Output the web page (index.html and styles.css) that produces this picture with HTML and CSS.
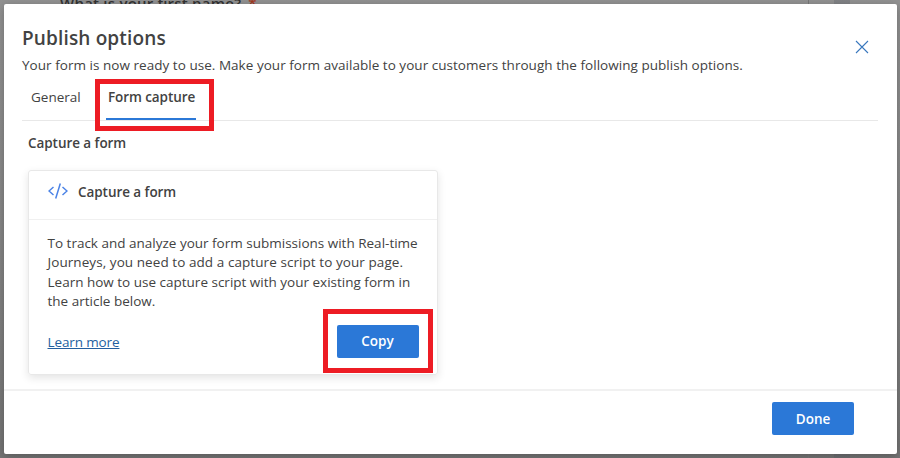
FILE: index.html
```html
<!DOCTYPE html>
<html lang="en">
<head>
<meta charset="utf-8">
<title>Publish options</title>
<link rel="stylesheet" href="styles.css">
</head>
<body>
<div class="backdrop">
  <div class="question">What is your first name? <span class="required">*</span></div>
  <div class="rail"></div>
</div>
<main class="dialog">
  <header class="head">
    <div>
      <h1 class="title">Publish options</h1>
      <p class="subtitle">Your form is now ready to use. Make your form available to your customers through the following publish options.</p>
    </div>
    <svg class="close" viewBox="0 0 14 14"><path d="M1 1L13 13M13 1L1 13"/></svg>
  </header>
  <nav class="tabs">
    <span class="tab">General</span>
    <span class="tab active">Form capture<i class="mark mark-tab"></i></span>
  </nav>
  <section class="content">
    <h2 class="section-title">Capture a form</h2>
    <article class="card">
      <div class="card-head">
        <svg class="code" viewBox="0 0 20 16"><path d="M5.5 4L1 8L5.5 12M14.5 4L19 8L14.5 12M12.3 .5L7.7 15.5"/></svg>
        <h3 class="card-title">Capture a form</h3>
      </div>
      <p class="text">To track and analyze your form submissions with Real-time<br><span class="loose">Journeys, you need to add a capture script to your page.</span><br>Learn how to use capture script with your existing form in<br>the article below.</p>
      <div class="actions">
        <a class="link">Learn more</a>
        <button class="button copy">Copy<i class="mark mark-copy"></i></button>
      </div>
    </article>
  </section>
  <footer class="foot"><button class="button">Done</button></footer>
</main>
</body>
</html>
```
FILE: styles.css
```css
* { box-sizing: border-box; }
body {
  margin: 0;
  width: 900px;
  height: 458px;
  overflow: hidden;
  padding: 4px 3px 4px 4px;
  background: #8b8b8b;
  font-family: "Open Sans", "Noto Sans", sans-serif;
  font-size: 13.5px;
  color: #424242;
}
h1, h2, h3, p { margin: 0; }
.backdrop {
  position: absolute;
  inset: 0;
  overflow: hidden;
  background: linear-gradient(#929292, #868686 50%, #747474);
}
.question {
  position: absolute;
  left: 60px;
  top: -7px;
  font-size: 15px;
  line-height: 20px;
  font-weight: 600;
  letter-spacing: .22px;
  color: #333;
  white-space: nowrap;
}
.required { color: #a3381f; margin-left: 3px; }
.rail {
  position: absolute;
  left: 808px;
  top: 0;
  width: 43px;
  height: 100%;
  border-left: 1px solid #777;
  background: linear-gradient(90deg, transparent 25px, rgba(90, 94, 104, .3) 25px, rgba(90, 94, 104, .3) 41px, transparent 41px);
}
.dialog {
  position: relative;
  height: 450px;
  background: #fff;
  border-radius: 2px;
  box-shadow: 0 2px 8px rgba(0, 0, 0, .25);
  display: flex;
  flex-direction: column;
}
.head {
  height: 74px;
  padding: 20px 28.5px 0 18px;
  display: flex;
  justify-content: space-between;
}
.title { font-size: 19px; line-height: 28px; font-weight: 600; letter-spacing: .15px; }
.subtitle { line-height: 20px; margin-top: 3px; white-space: nowrap; letter-spacing: .036px; }
.close { width: 14px; height: 14px; margin-top: 16px; fill: none; stroke: #3977bd; stroke-width: 1.1; }
.tabs {
  height: 43px;
  margin: 0 19px 0 18px;
  border-bottom: 1px solid #e8e8e8;
  display: flex;
}
.tab { position: relative; height: 42px; padding-top: 9px; line-height: 20px; margin-left: 9px; width: 50px; white-space: nowrap; }
.active {
  width: 90px;
  margin-left: 25px;
  padding-left: 2px;
  font-weight: 600;
  letter-spacing: -.08px;
  border-bottom: 2px solid #2b78d7;
}
.mark { position: absolute; border: 5px solid #ed1c24; }
.mark-tab { left: -11px; top: 1px; width: 119px; height: 52px; }
.mark-copy { left: -14px; top: -16px; width: 110px; height: 64px; }
.content { flex: 1; padding: 12px 24px 0; }
.section-title { font-size: 13.5px; line-height: 20px; font-weight: 600; letter-spacing: -.06px; }
.card {
  width: 410px;
  height: 205px;
  margin-top: 17px;
  border: 1px solid #e8e8e8;
  border-radius: 3px;
  box-shadow: 0 3px 8px rgba(0, 0, 0, .11);
}
.card-head { display: flex; height: 49px; border-bottom: 1px solid #f0f0f0; padding: 11px 18px 0; }
.code { width: 20px; height: 16px; margin: 1px 10px 0 1px; fill: none; stroke: #4b83e6; stroke-width: 1.5; }
.card-title { font-size: 13.5px; line-height: 20px; font-weight: 600; letter-spacing: -.06px; }
.text { padding: 14px 0 0 18.5px; line-height: 19.3px; white-space: nowrap; }
.loose { letter-spacing: .07px; }
.actions { display: flex; justify-content: space-between; padding: 13.8px 18px 0 18.5px; }
.link { line-height: 20px; margin-top: 7px; color: #245f9f; text-decoration: underline; letter-spacing: -.12px; }
.button {
  position: relative;
  width: 82px;
  height: 33px;
  padding: 0;
  border: 0;
  border-radius: 2px;
  background: #2b78d7;
  color: #fff;
  font: 600 13.5px "Open Sans", sans-serif;
}
.copy { padding-right: 1px; }
.foot { height: 65px; border-top: 2px solid #f1f1f1; padding: 11px 43px 0 0; text-align: right; }
```
